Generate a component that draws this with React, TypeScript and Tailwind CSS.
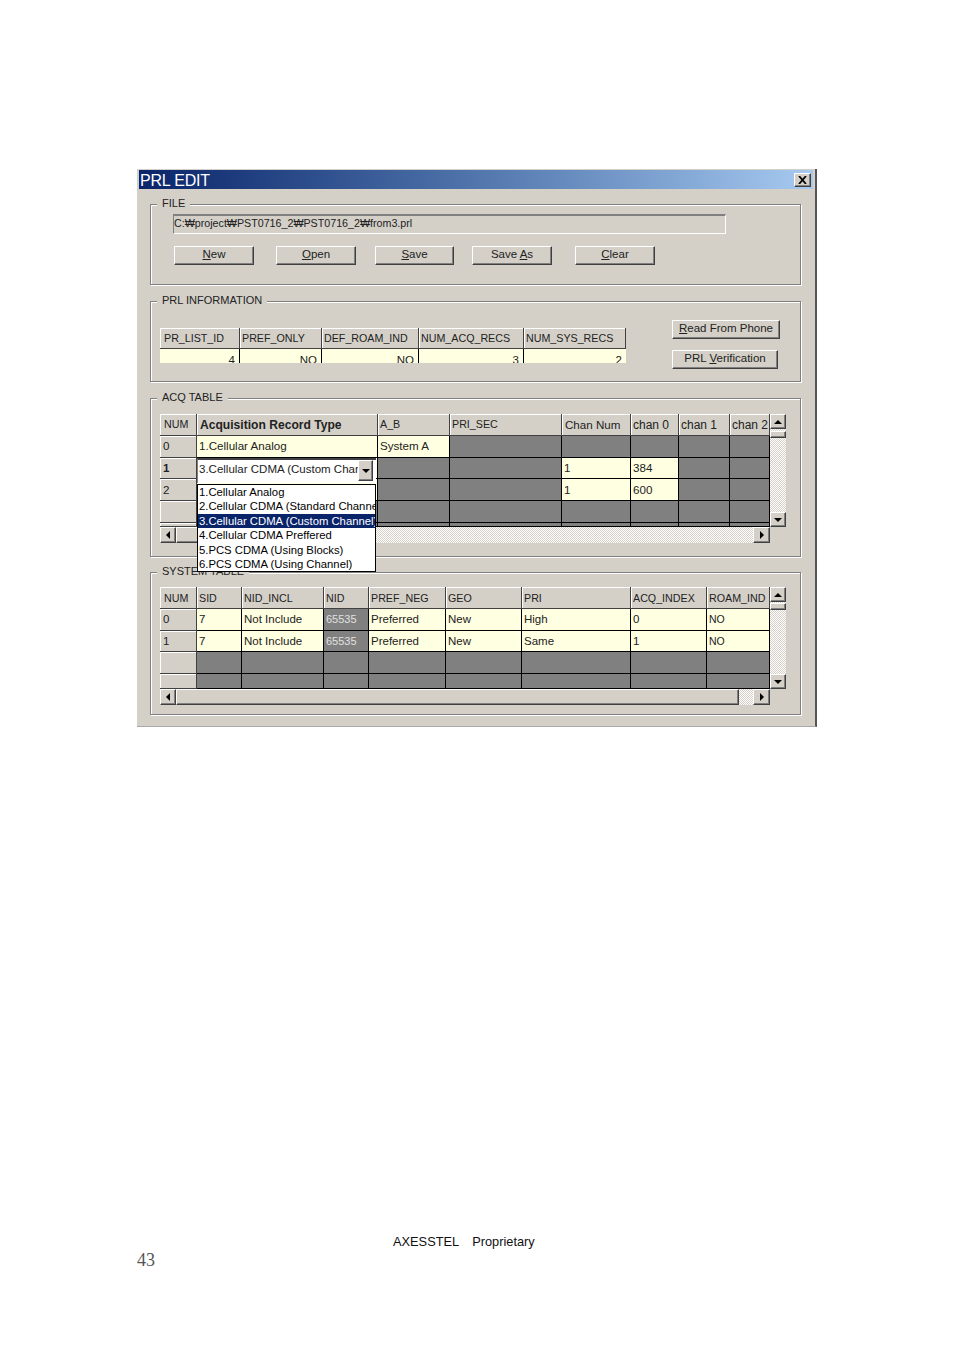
import React from "react";

type Kind = "corner" | "head" | "side" | "data" | "gray";

const headBase = "text-[10.7px] bg-[#d4d0c8] border-r border-b border-r-[#404040] border-b-[#404040] shadow-[inset_1px_1px_0_#fff]";

const kindClass: Record<Kind, string> = {
  corner: `pl-[4px] ${headBase}`,
  head: `pl-[2px] ${headBase}`,
  side: "pl-[3px] bg-[#d4d0c8] border-r border-b border-r-[#404040] border-b-[#404040] shadow-[inset_1px_1px_0_#fff]",
  data: "pl-[2px] bg-[#ffffe1] border-r border-b border-black",
  gray: "pl-[2px] bg-[#808080] border-r border-b border-black",
};

function Cell({ kind, children, className = "" }: { kind: Kind; children?: React.ReactNode; className?: string }) {
  return (
    <div className={`overflow-hidden whitespace-nowrap flex items-center ${kindClass[kind]} ${className}`}>
      {children}
    </div>
  );
}

function Arrow({ dir }: { dir: "up" | "down" | "left" | "right" }) {
  const pts = {
    up: "4,0 0,4 8,4",
    down: "0,0 8,0 4,4",
    left: "4,0 4,8 0,4",
    right: "0,0 4,4 0,8",
  }[dir];
  const size = dir === "up" || dir === "down" ? "w-2 h-1" : "w-1 h-2";
  const box = dir === "up" || dir === "down" ? "0 0 8 4" : "0 0 4 8";
  return (
    <svg viewBox={box} className={size}>
      <polygon points={pts} fill="#000" />
    </svg>
  );
}

const raised =
  "bg-[#d4d0c8] border-t border-l border-r border-b border-t-white border-l-white border-r-[#404040] border-b-[#404040] shadow-[inset_-1px_-1px_0_#808080]";
const dither = "bg-[repeating-conic-gradient(#d4d0c8_0_25%,#fff_0_50%)] bg-[length:2px_2px]";

function ScrollBtn({ dir, className = "" }: { dir: "up" | "down" | "left" | "right"; className?: string }) {
  return (
    <div className={`flex items-center justify-center shrink-0 ${raised} ${className}`}>
      <Arrow dir={dir} />
    </div>
  );
}

function Btn({ className = "", children }: { className?: string; children: React.ReactNode }) {
  return (
    <div className={`flex items-center justify-center h-[19px] pb-px text-[11.5px] text-[#222] ${raised} ${className}`}>
      <span>{children}</span>
    </div>
  );
}

function Group({ title, className = "", children }: { title: string; className?: string; children: React.ReactNode }) {
  return (
    <div className={`relative ml-[13px] w-[651px] border border-[#808080] shadow-[inset_1px_1px_0_#fff,1px_1px_0_#fff] ${className}`}>
      <div className="absolute -top-[10px] left-[6px] bg-[#d4d0c8] px-[5px] text-[11px] leading-[16px] text-[#222] whitespace-nowrap">
        {title}
      </div>
      {children}
    </div>
  );
}

const U = ({ children }: { children: string }) => <span className="underline">{children}</span>;

const combos = [
  "1.Cellular Analog",
  "2.Cellular CDMA (Standard Channel)",
  "3.Cellular CDMA (Custom Channel)",
  "4.Cellular CDMA Preffered",
  "5.PCS CDMA (Using Blocks)",
  "6.PCS CDMA (Using Channel)",
];

function AcqTable() {
  const grays = (n: number) => Array.from({ length: n }).map((_, i) => <Cell key={i} kind="gray" />);
  return (
    <div className="relative w-[610px]">
      <div className="grid grid-cols-[37px_181px_72px_112px_69px_48px_51px_40px] grid-rows-[22px_22px_21px_22px_22px_4px] h-[113px] overflow-hidden text-[11.6px] text-[#222]">
        <Cell kind="corner">NUM</Cell>
        <Cell kind="side" className="font-bold text-[12.1px] pt-px">Acquisition Record Type</Cell>
        <Cell kind="head">A_B</Cell>
        <Cell kind="head">PRI_SEC</Cell>
        <Cell kind="side" className="text-[11.6px]">Chan Num</Cell>
        <Cell kind="head" className="text-[12px]">chan 0</Cell>
        <Cell kind="head" className="text-[12px]">chan 1</Cell>
        <Cell kind="head" className="text-[12px]">chan 2</Cell>

        <Cell kind="side" className="pb-[2px]">0</Cell>
        <Cell kind="data" className="pb-[2px]">1.Cellular Analog</Cell>
        <Cell kind="data" className="pb-[2px]">System A</Cell>
        {grays(5)}

        <Cell kind="side" className="font-bold">1</Cell>
        <Cell kind="data" />
        {grays(2)}
        <Cell kind="data">1</Cell>
        <Cell kind="data">384</Cell>
        {grays(2)}

        <Cell kind="side">2</Cell>
        <Cell kind="data" />
        {grays(2)}
        <Cell kind="data">1</Cell>
        <Cell kind="data">600</Cell>
        {grays(2)}

        <Cell kind="side" />
        {grays(7)}
        <Cell kind="side" />
        {grays(7)}
      </div>

      {/* combo open over row 1 */}
      <div className="absolute left-[37px] top-[44px] w-[179px] h-[25px] z-10 bg-white border-t-2 border-l border-t-[#404040] border-l-[#808080] flex items-start text-[11.5px] text-[#222]">
        <div className="w-[160px] pl-px leading-[19px] overflow-hidden whitespace-nowrap">3.Cellular CDMA (Custom Channel)</div>
        <ScrollBtn dir="down" className="w-[15px] h-[21px]" />
      </div>
      <div className="absolute left-[37px] top-[70px] w-[179px] h-[88px] z-10 bg-white border border-black text-[11.3px] text-black overflow-hidden">
        {combos.map((c, i) => (
          <div
            key={c}
            className={`h-[14.4px] leading-[14px] pl-[1px] whitespace-nowrap ${i === 2 ? "bg-[#0a246a] text-white" : ""}`}
          >
            {c}
          </div>
        ))}
      </div>
    </div>
  );
}

function SysTable() {
  const rows = [
    ["0", "7", "Not Include", "65535", "Preferred", "New", "High", "0", "NO"],
    ["1", "7", "Not Include", "65535", "Preferred", "New", "Same", "1", "NO"],
  ];
  const grays = (n: number) => Array.from({ length: n }).map((_, i) => <Cell key={i} kind="gray" />);
  return (
    <div className="grid grid-cols-[37px_45px_82px_45px_77px_76px_109px_76px_63px] grid-rows-[22px_22px_21px_22px_15px] h-[102px] w-[610px] overflow-hidden text-[11.5px] text-[#222]">
      {["NUM", "SID", "NID_INCL", "NID", "PREF_NEG", "GEO", "PRI", "ACQ_INDEX", "ROAM_IND"].map((h, i) => (
        <Cell key={h} kind={i === 0 ? "corner" : "head"} className="pt-px">{h}</Cell>
      ))}
      {rows.map((r, ri) => {
        const nudge = ri === 1 ? "pt-px" : "";
        return r.map((v, i) =>
          i === 0 ? (
            <Cell key={r[0] + i} kind="side" className={nudge}>{v}</Cell>
          ) : i === 3 ? (
            <Cell key={r[0] + i} kind="gray" className={`text-[#e0e0e0] text-[11px] ${nudge}`}>{v}</Cell>
          ) : i === 8 ? (
            <Cell key={r[0] + i} kind="data" className={`text-[10.5px] ${nudge}`}>{v}</Cell>
          ) : (
            <Cell key={r[0] + i} kind="data" className={nudge}>{v}</Cell>
          )
        );
      })}
      <Cell kind="side" />
      {grays(8)}
      <Cell kind="side" />
      {grays(8)}
    </div>
  );
}

function VScroll({ thumbTop, className = "" }: { thumbTop: string; className?: string }) {
  return (
    <div className={`w-4 flex flex-col ${dither} ${className}`}>
      <ScrollBtn dir="up" className="h-[15px]" />
      <div className={`h-[7px] ${raised} ${thumbTop}`} />
      <div className="flex-1" />
      <ScrollBtn dir="down" className="h-[15px]" />
    </div>
  );
}

export default function App() {
  return (
    <div className="relative w-[954px] h-[1351px] overflow-hidden bg-white pt-[169px] pl-[137px] font-['Liberation_Sans',Arial,sans-serif]">
      {/* dialog */}
      <div className="w-[680px] h-[558px] bg-[#d4d0c8] border-r-2 border-r-[#555] border-b border-b-[#a8a8a8] pt-px">
        <div className="mx-[2px] h-[19px] flex items-center justify-between bg-gradient-to-r from-[#0a246a] to-[#a6caf0] pl-px pr-[2px]">
          <span className="text-white text-[16px] tracking-[-0.2px] leading-[19px] pt-px">PRL EDIT</span>
          <div className={`w-[17px] h-[14px] flex items-center justify-center ${raised}`}>
            <svg viewBox="0 0 9 8" className="w-[9px] h-2">
              <path d="M1 0L8 8M8 0L1 8" stroke="#000" strokeWidth="1.8" />
            </svg>
          </div>
        </div>

        <Group title="FILE" className="mt-[15px] h-[81px] pt-[9px] pl-[22px]">
          <div className="w-[553px] h-5 border-t-2 border-l border-r border-b border-t-[#808080] border-l-[#808080] border-r-white border-b-white text-[10.7px] leading-[15px] text-[#222] whitespace-nowrap">
            C:₩project₩PST0716_2₩PST0716_2₩from3.prl
          </div>
          <div className="flex mt-[12px] ml-px">
            <Btn className="w-[80px]"><U>N</U>ew</Btn>
            <Btn className="w-[80px] ml-[22px]"><U>O</U>pen</Btn>
            <Btn className="w-[79px] ml-[19px]"><U>S</U>ave</Btn>
            <Btn className="w-[80px] ml-[18px]">Save <U>A</U>s</Btn>
            <Btn className="w-[80px] ml-[23px]"><U>C</U>lear</Btn>
          </div>
        </Group>

        <Group title="PRL INFORMATION" className="mt-[16px] h-[81px] pt-[18px] pl-[9px] flex items-start">
          <div className="mt-[8px] w-[466px] grid grid-cols-[80px_82px_97px_105px_102px] grid-rows-[21px_14px] text-[10.7px] text-[#222]">
            {["PR_LIST_ID", "PREF_ONLY", "DEF_ROAM_IND", "NUM_ACQ_RECS", "NUM_SYS_RECS"].map((h, i) => (
              <Cell key={h} kind={i === 0 ? "corner" : "head"} className="pt-px">{h}</Cell>
            ))}
            {["4", "NO", "NO", "3", "2"].map((v, i) => (
              <div key={i} className="bg-[#ffffe1] border-r border-black last:border-r-0 overflow-hidden text-right pr-[4px] pt-[4px] leading-[14px] text-[11.5px]">
                {v}
              </div>
            ))}
          </div>
          <div className="ml-[46px] flex flex-col gap-[11px]">
            <Btn className="w-[108px]"><U>R</U>ead From Phone</Btn>
            <Btn className="w-[106px]">PRL <U>V</U>erification</Btn>
          </div>
        </Group>

        <Group title="ACQ TABLE" className="mt-[16px] h-[159px] pt-[15px] pl-[9px]">
          <div className="flex">
            <AcqTable />
            <VScroll thumbTop="mt-[2px]" className="h-[113px]" />
          </div>
          <div className="flex w-[610px] h-4">
            <ScrollBtn dir="left" className="w-4 h-4" />
            <div className={`flex-1 ${dither}`}>
              <div className={`w-[100px] h-4 ${raised}`} />
            </div>
            <ScrollBtn dir="right" className="w-[17px] h-4" />
          </div>
        </Group>

        <Group title="SYSTEM TABLE" className="mt-[15px] h-[143px] pt-[14px] pl-[9px]">
          <div className="flex">
            <SysTable />
            <VScroll thumbTop="mt-px" className="h-[102px]" />
          </div>
          <div className="flex w-[610px] h-4">
            <ScrollBtn dir="left" className="w-4 h-4" />
            <div className={`flex-1 ${dither}`}>
              <div className={`w-[563px] h-4 ${raised}`} />
            </div>
            <ScrollBtn dir="right" className="w-[17px] h-4" />
          </div>
        </Group>
      </div>

      {/* page footer */}
      <div className="mt-[507px] ml-[256px] text-[12.8px] leading-[16px] text-[#111] whitespace-nowrap">
        AXESSTEL<span className="ml-[13px]">Proprietary</span>
      </div>
      <div className="font-['Liberation_Serif',serif] text-[18px] leading-[20px] text-[#555]">43</div>
    </div>
  );
}
